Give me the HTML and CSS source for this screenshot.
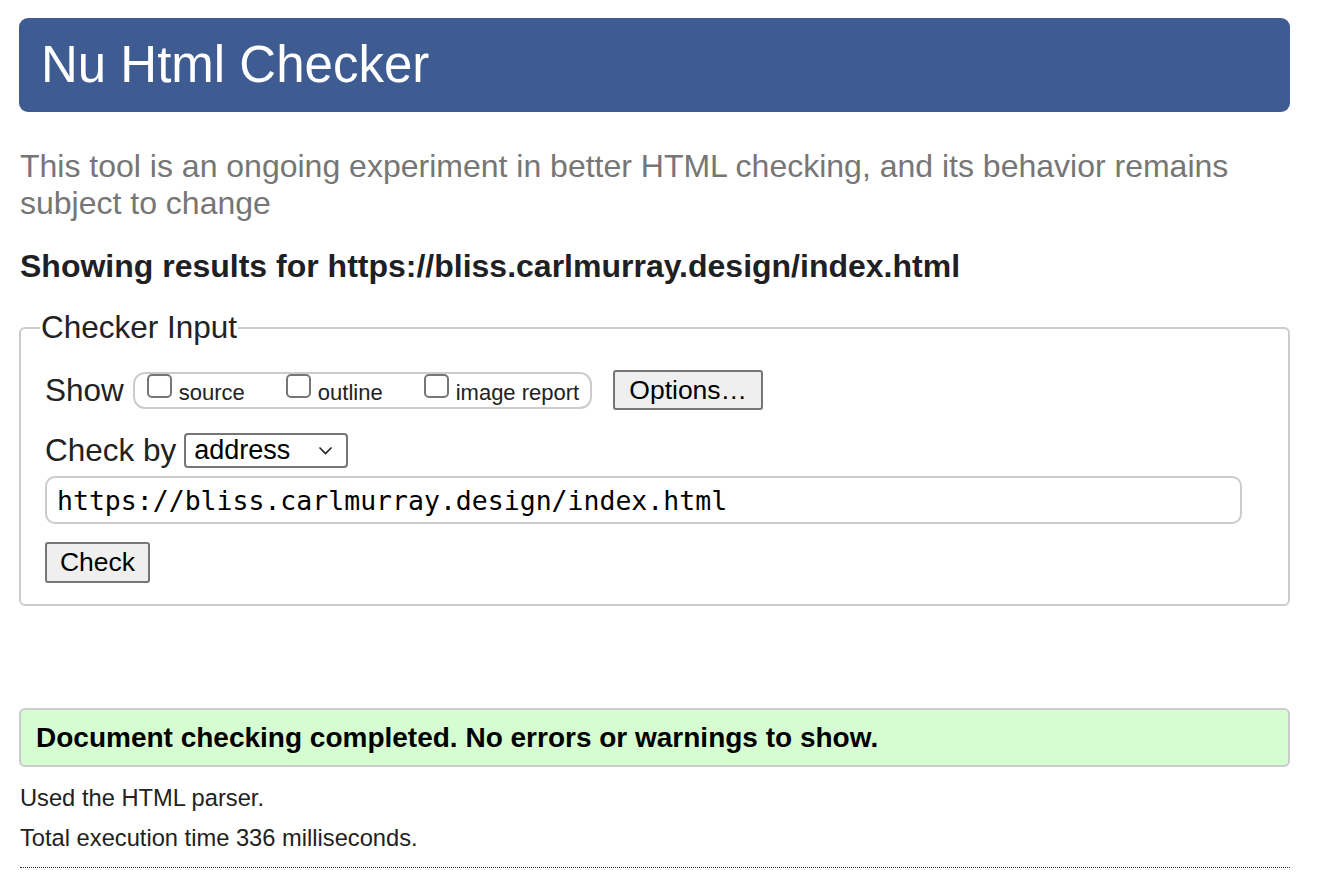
FILE: index.html
```html
<!DOCTYPE html>
<html>
<head>
<meta charset="utf-8">
<title>Nu Html Checker</title>
<link rel="stylesheet" href="styles.css">
</head>
<body>
<div class="page">
  <h1 class="banner">Nu Html Checker</h1>
  <p class="intro">This tool is an ongoing experiment in better HTML checking, and its behavior remains subject to change</p>
  <p class="showing">Showing results for https://bliss.carlmurray.design/index.html</p>
  <fieldset class="checker">
    <legend>Checker Input</legend>
    <div class="row show-row">
      <span class="label">Show</span>
      <div class="opts">
        <label class="opt"><span class="box"></span><span class="txt">source</span></label>
        <label class="opt"><span class="box"></span><span class="txt">outline</span></label>
        <label class="opt"><span class="box"></span><span class="txt">image report</span></label>
      </div>
      <button class="btn options">Options…</button>
    </div>
    <div class="row by-row">
      <span class="label">Check by</span>
      <div class="select">
        <span>address</span>
        <svg class="chev" width="15" height="9" viewBox="0 0 15 9"><path d="M1.5 1.5 L7.5 7.5 L13.5 1.5" fill="none" stroke="#222" stroke-width="1.6"/></svg>
      </div>
    </div>
    <div class="url">https://bliss.carlmurray.design/index.html</div>
    <div class="row"><button class="btn check">Check</button></div>
  </fieldset>
  <div class="success">Document checking completed. No errors or warnings to show.</div>
  <p class="meta first">Used the HTML parser.</p>
  <p class="meta">Total execution time 336 milliseconds.</p>
  <div class="rule"></div>
</div>
</body>
</html>
```

FILE: styles.css
```css
html, body { margin: 0; padding: 0; background: #fff; }
body { font-family: "Liberation Sans", Arial, sans-serif; color: #222; }
.page { width: 1271px; margin-left: 19px; padding-top: 18px; }
.banner {
  margin: 0;
  height: 94px;
  line-height: 94px;
  background: #3e5c92;
  color: #fff;
  border-radius: 9px;
  padding-left: 22px;
  font-size: 51px;
  font-weight: normal;
}
.intro {
  margin: 36px 0 0 1px;
  font-size: 32px;
  line-height: 37px;
  color: #767676;
}
.showing {
  margin: 27px 0 0 1px;
  font-size: 32px;
  line-height: 34px;
  font-weight: bold;
  color: #1f2024;
}
.checker {
  margin: 26px 0 0 0;
  border: 2px solid #ccc;
  border-radius: 6px;
  padding: 22px 24px 21px 24px;
}
.checker legend {
  font-size: 31.5px;
  padding: 0 1px;
  margin-left: -5px;
  color: #222;
}
.row { display: flex; align-items: center; }
.label { font-size: 31.5px; color: #222; }
.show-row { margin-top: 2px; }
.opts {
  display: flex;
  align-items: center;
  margin-left: 9px;
  height: 37px;
  box-sizing: border-box;
  border: 2px solid #ccc;
  border-radius: 12px;
  padding: 0 11px 0 12px;
  gap: 41px;
}
.opt { display: flex; align-items: center; font-size: 22px; color: #222; }
.txt { margin-top: 6px; }
.box {
  width: 25px; height: 24px;
  border: 2px solid #767676;
  border-radius: 5px;
  box-sizing: border-box;
  margin-right: 7px;
  margin-top: -9px;
}
.btn {
  font-family: "Liberation Sans", Arial, sans-serif;
  font-size: 26.5px;
  background: #efefef;
  border: 2px solid #767676;
  border-radius: 3px;
  color: #000;
  padding: 0;
  height: 41px;
}
.options { margin-left: 21px; width: 150px; height: 40px; }
.by-row { margin-top: 22px; }
.select {
  margin-left: 8px;
  width: 164px; height: 35px;
  box-sizing: border-box;
  border: 2px solid #767676;
  border-radius: 4px;
  display: flex; align-items: center; justify-content: space-between;
  padding: 0 13px 0 8px;
  font-size: 27px; color: #000;
}
.url {
  margin-top: 7px;
  width: 1197px; height: 48px;
  box-sizing: border-box;
  border: 2px solid #ccc;
  border-radius: 10px;
  padding-left: 10px;
  display: flex; align-items: center;
  font-family: "DejaVu Sans Mono", monospace;
  font-size: 26.5px; color: #000;
}
.check { margin-top: 18px; width: 105px; }
.success {
  margin-top: 102px;
  height: 59px;
  box-sizing: border-box;
  border: 2px solid #ccc;
  border-radius: 6px;
  background: #d6fdd1;
  padding-left: 15px;
  display: flex; align-items: center;
  font-size: 28px; font-weight: bold; color: #000;
}
.meta { margin: 0 0 0 1px; font-size: 23.7px; line-height: 40px; color: #222; }
.meta.first { margin-top: 11px; }
.rule { margin-top: 9px; margin-left: 1px; border-top: 1.5px dotted #333; }
```
